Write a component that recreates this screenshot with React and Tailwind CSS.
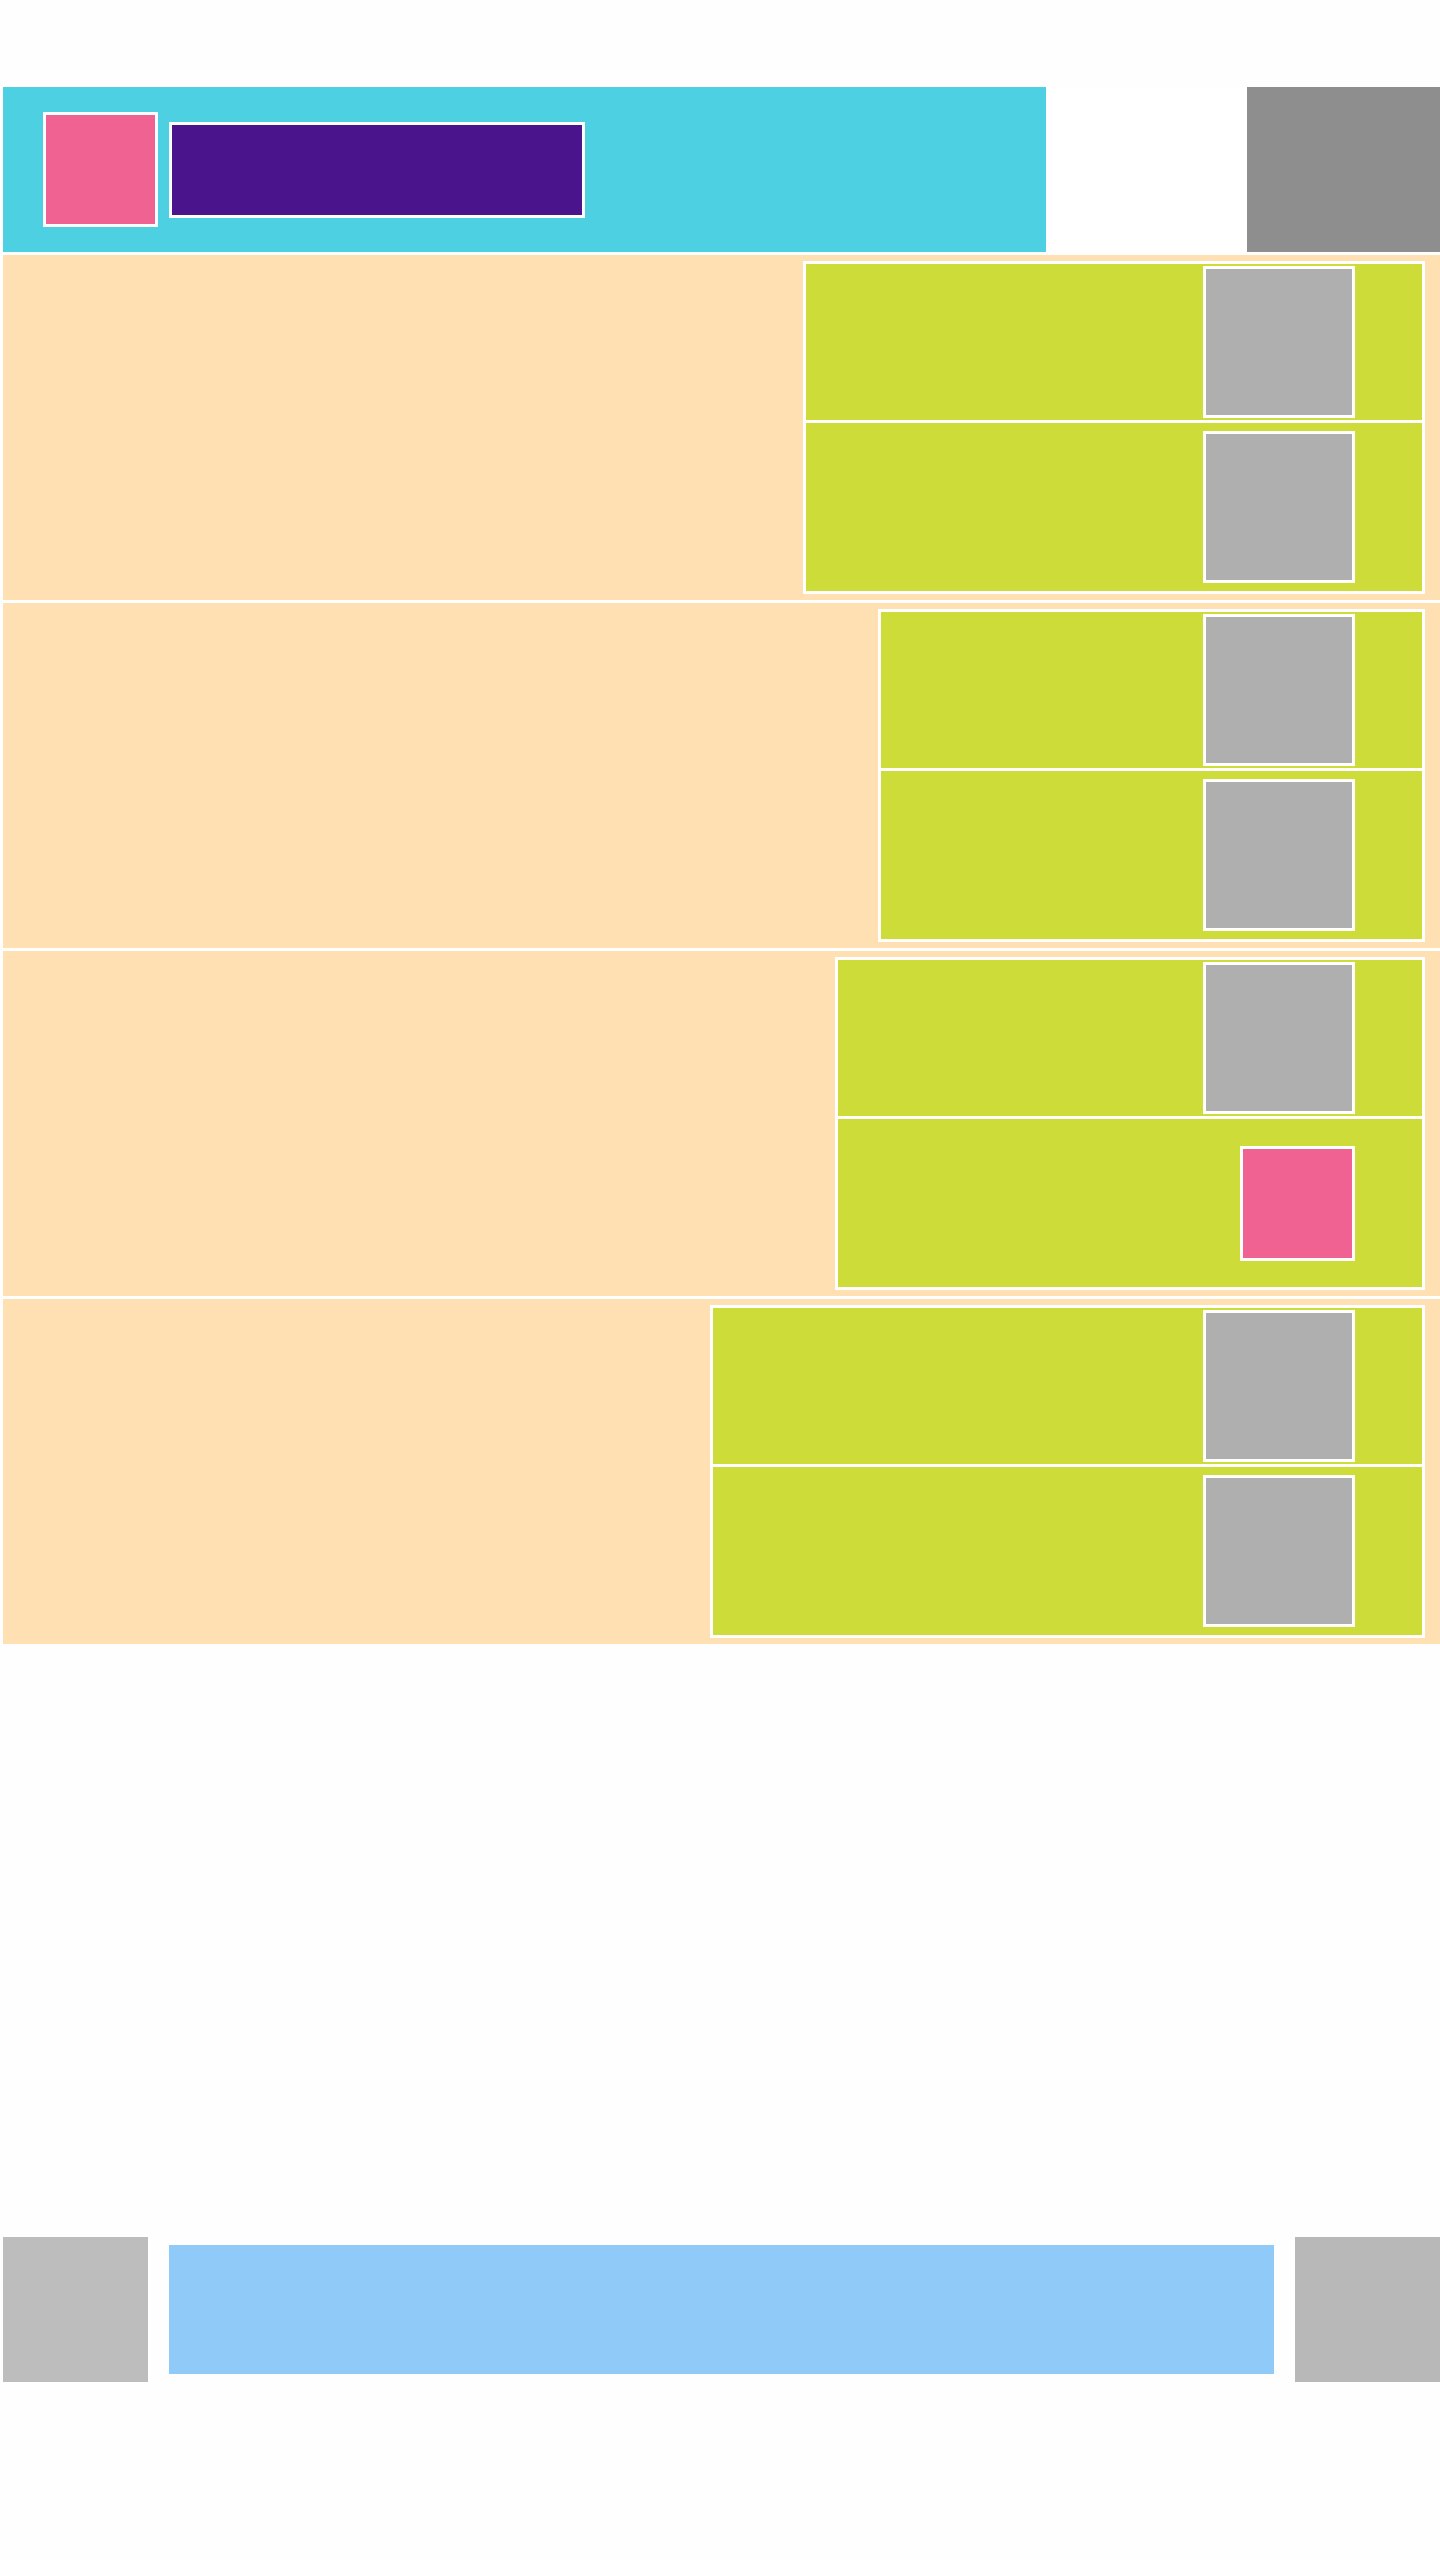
const rows = [
    { width: 'w-[622px]', last: 'gray' },
    { width: 'w-[547px]', last: 'gray' },
    { width: 'w-[590px]', last: 'pink' },
    { width: 'w-[715px]', last: 'gray' },
];

const Thumb = () => (
    <div className="w-[152px] h-[152px] bg-[#afafaf] border-[3px] border-white" />
);

const Badge = () => (
    <div className="w-[115px] h-[115px] bg-[#f06292] border-[3px] border-white" />
);

function Row({ width, last }) {
    return (
        <div className="h-[345px] bg-[#ffe0b2] flex justify-end py-[6px] pr-[15px]">
            <div className={`${width} border-[3px] border-white flex flex-col`}>
                <div className="h-[159px] bg-[#cddc39] border-b-[3px] border-white flex items-center justify-end pr-[67px]">
                    <Thumb />
                </div>
                <div className="h-[168px] bg-[#cddc39] flex items-center justify-end pr-[67px]">
                    {last === 'pink' ? <Badge /> : <Thumb />}
                </div>
            </div>
        </div>
    );
}

export default function App() {
    return (
        <div className="min-h-[2560px] bg-[#fefefe] pl-[3px] pt-[87px]">
            <header className="flex h-[165px]">
                <div className="w-[1043px] bg-[#4dd0e1] flex items-center pl-[40px] gap-[11px]">
                    <Badge />
                    <div className="w-[416px] h-[96px] bg-[#4a148c] border-[3px] border-white" />
                </div>
                <div className="flex-1 bg-white" />
                <div className="w-[193px] bg-[#8e8e8e]" />
            </header>

            <div className="mt-[3px] flex flex-col gap-[3px]">
                {rows.map((r, i) => (
                    <Row key={i} {...r} />
                ))}
            </div>

            <footer className="mt-[593px] h-[145px] flex items-center">
                <div className="w-[145px] h-[145px] bg-[#bdbdbd]" />
                <div className="ml-[21px] w-[1105px] h-[129px] bg-[#90caf9]" />
                <div className="ml-[21px] w-[145px] h-[145px] bg-[#b8b8b8]" />
            </footer>
        </div>
    );
}
